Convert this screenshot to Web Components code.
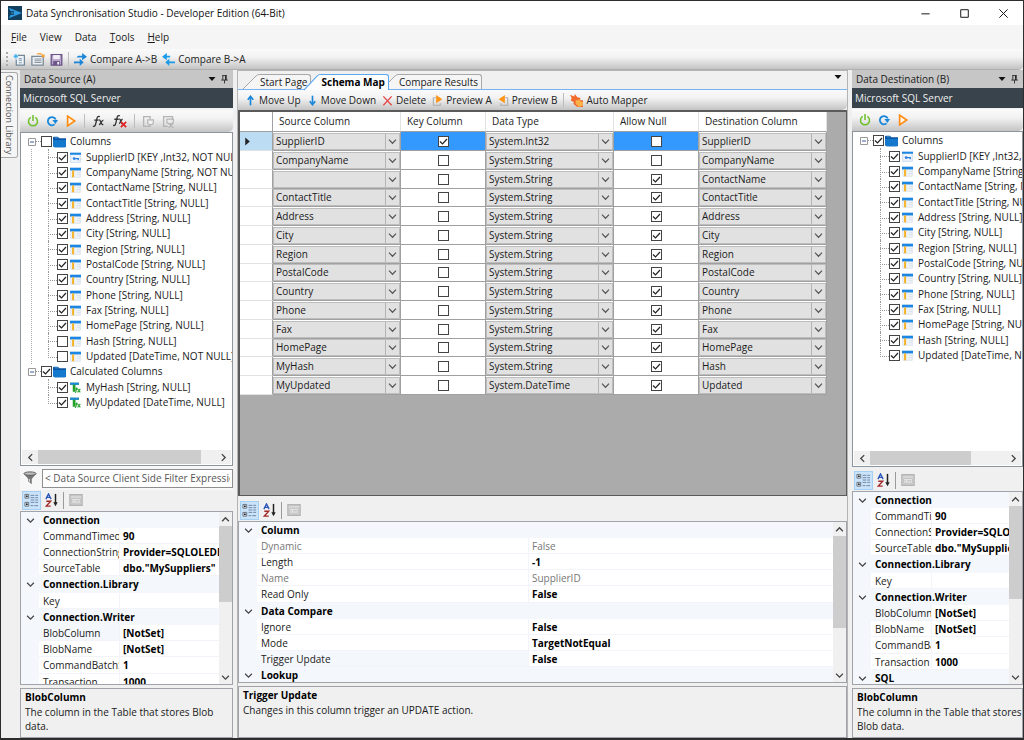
<!DOCTYPE html>
<html lang="en">
<head>
<meta charset="utf-8">
<title>Data Synchronisation Studio</title>
<style>
html,body{height:100%;margin:0}
body{font:10px/15px "Open Sans",sans-serif;color:#1a1a1a;background:#f0f0f0;overflow:hidden}
</style>
</head>
<body>
<sync-studio></sync-studio>
<script>
const ICONS={
logo:'<path fill="#123f5e" d="M0 0h16v16H0z"/><path fill="#2f9be0" d="M1 2l15 6-15 6 3-6z"/><path fill="#0d3552" d="M2 6h5v4H2z"/><path d="M3 8h5" stroke="#3fb0f0"/>',
newdoc:'<path d="M6 3h8v12H4V8" fill="#eef4fa" stroke="#6f8797" stroke-width="1.5"/><path d="M7 7h4M7 9h4M7 12h4" stroke="#6f8797"/><path d="M3.500 1v6M.5 4h6M1.500 2l4 4M5.500 2l-4 4" stroke="#22a4ea"/>',
open:'<path d="M1 5h13v10H1z" fill="#eef1f4" stroke="#7c8a98" stroke-width="1.500"/><path d="M4 8h8M4 10h8M4 12h8" stroke="#7c8a98"/><path d="M7 2.500q5-2 7 2" fill="none" stroke="#f7a030" stroke-width="1.500"/><path d="M15.500 2v4h-4z" fill="#f7a030"/>',
save:'<path d="M1.500 2h13v13h-13z" fill="#b9a6cc" stroke="#6a5386" stroke-width="1.600"/><path d="M4 2.500h8v5H4z" fill="#f3eff7"/><path d="M4 10h8v5H4z" fill="#6a5386"/><path d="M9 11h2v3H9z" fill="#fff"/>',
ab:'<path d="M5 4.500h6M0 11.500h8" stroke="#1c86d8" stroke-width="2"/><path d="M10 0l6 4.500L10 9zM7 7l5 4.500L7 16z" fill="#1c86d8"/><path d="M3 5.500l2-2v2zM0 12.500l2-2v2z" fill="#1c86d8"/>',
ba:'<path d="M5 4.500h5M8 11.500h8" stroke="#1c9be8" stroke-width="2"/><path d="M6 0L0 4.500 6 9zM9 7l-5 4.500L9 16z" fill="#1c9be8"/>',
power:'<path d="M5 3.200a6 6 0 1 0 6 0" fill="none" stroke="#6cc02a" stroke-width="2"/><path d="M8 0v8" stroke="#6cc02a" stroke-width="2"/>',
refresh:'<path d="M13 6A5.500 5.500 0 1 0 11.500 12.500" fill="none" stroke="#1787dc" stroke-width="2.400"/><path d="M8.500 6.500h7.500l-3.500 5.500z" fill="#1787dc"/>',
play:'<path d="M3.500 1.500v13L13 8z" fill="#fff3e4" stroke="#ff8c12" stroke-width="2.200"/>',
fx:'<path d="M1 14c3 1 3-2 4-6s1-6 4-5M2.500 7h5M8 7c2-1 2 6 5 5M13 7c-2 0-3 5-5 5" fill="none" stroke="#333" stroke-width="1.500"/>',
fxdel:'<path d="M0 13c3 1 3-2 4-6s1-6 4-5M1.500 6h5M7 6c2-1 2 6 4 5M11 6c-2 0-3 5-4 5" fill="none" stroke="#333" stroke-width="1.500"/><path d="M9 9l6 6M15 9l-6 6" stroke="#df2222" stroke-width="2"/>',
imp:'<path d="M10 5V2H2v12h8v-2" fill="none" stroke="#b4b4b4" stroke-width="1.600"/><path d="M7 6h7v3q0 3-3.500 3T7 9z" fill="#f0f0f0" stroke="#b4b4b4" stroke-width="1.400"/>',
impx:'<path d="M7 14H2V2h11v4" fill="none" stroke="#b4b4b4" stroke-width="1.600"/><path d="M6 5h8v3q0 3-4 3T6 8zM8 10l6 6M14 10l-6 6" fill="none" stroke="#b4b4b4" stroke-width="1.400"/>',
folder:'<path d="M0 3q0-1 1-1h5l2 2h8v10q0 1-1 1H2q-2 0-2-3z" fill="#0a55a4"/><path d="M0 6h16v7q0 2-2 2H2q-2 0-2-3z" fill="#1478cc"/><path d="M2 3h4l1 1H2z" fill="#58a8e6"/>',
col:'<path d="M1 2h14v13H1z" fill="#eef3f8" stroke="#d3dde8"/><path d="M0 1h16v4H0z" fill="#1c86e0"/><path d="M3 5h3v10H3z" fill="#f5b429"/><path d="M10 8h5M10 11h5" stroke="#d3dde8"/>',
key:'<path d="M1 2h14v13H1z" fill="#eef5fc" stroke="#b9cfe6"/><path d="M0 1h16v3H0z" fill="#1c86e0"/><circle cx="6" cy="9.500" r="2" fill="#2a7fe0"/><path d="M7 9.500h6M12 9v3" stroke="#2a7fe0" stroke-width="1.800"/>',
calc:'<path d="M0 1h13v3H8v10H4V4H0z" fill="#22a02a"/><path d="M0 1h13v3H0z" fill="#1c86e0"/><path d="M7 16c2 0 2-4 3-8M8 10h3M11 10l4 5M15 10l-4 5" fill="none" stroke="#22a02a" stroke-width="1.500"/>',
up:'<path d="M8 15V4" stroke="#1787dc" stroke-width="2.400"/><path d="M4 7l4-5 4 5" fill="none" stroke="#1787dc" stroke-width="2.400"/>',
down:'<path d="M8 1v11" stroke="#1787dc" stroke-width="2.400"/><path d="M4 9l4 5 4-5" fill="none" stroke="#1787dc" stroke-width="2.400"/>',
del:'<path d="M2 2l12 13M14 2L2 15" stroke="#e54848" stroke-width="1.900"/>',
preva:'<path d="M6 4H2v11h10v-3" fill="none" stroke="#b4b4b4" stroke-width="1.800"/><path d="M6 0l9 6-9 6z" fill="#ff9417"/>',
prevb:'<path d="M10 4h4v11H4v-3" fill="none" stroke="#b4b4b4" stroke-width="1.800"/><path d="M10 0L1 6l9 6z" fill="#ff9417"/>',
auto:'<path d="M0 1l5 2 1-3 3 4 4 1-1 2 4 1v8H9l-5-4 1-2-4-2 1-3z" fill="#f26a2c"/><path d="M7 7l3 1 1-2 2 3 3 1v4l-5 2-4-4z" fill="#fbb24a"/>',
funnel:'<path d="M1 3h14l-5 6v6l-4-3V9z" fill="#777"/><ellipse cx="8" cy="3" rx="7" ry="2" fill="#bbb" stroke="#555"/><path d="M7 9v3l1 1V9z" fill="#ddd"/>',
cat:'<path d="M1 1.500h4v4H1zM1 10h4v4H1z" fill="#fff" stroke="#5c6d80"/><path d="M2 3.500h2M3 2.500v2M2 12h2M3 11v2" stroke="#111"/><path d="M7 2.500h4M12 2.500h3M7 5h4M12 5h3M7 7.500h4M12 7.500h3M7 10h4M12 10h3M7 13.500h3M11 13.500h4" stroke="#6b83a4"/>',
az:'<path d="M1 7l3-6 3 6M2 5h4" fill="none" stroke="#2a55b8" stroke-width="1.500"/><path d="M1.500 9.500h5L1.500 15h5" fill="none" stroke="#a32a2a" stroke-width="1.600"/><path d="M12 1v11" stroke="#222" stroke-width="1.700"/><path d="M9.500 10.500h5L12 15z" fill="#222"/>',
pages:'<path d="M1 2h14v12H1z" fill="#d6d6d6" stroke="#b4b4b4" stroke-width="1.500"/><path d="M3 6.500h10v5H3z" fill="#ececec" stroke="#bbb"/><path d="M4 9h2M7 9h5" stroke="#aaa"/>',
tri:'<path d="M1 4h14l-7 8z" fill="#111"/>',
pin:'<path d="M4 1h8M5 1v8M11 1v8M2 9h12M8 9v6" fill="none" stroke="#222" stroke-width="1.500"/><path d="M9 1h2v8H9z" fill="#222"/>',
chd:'<path d="M2 5l6 6 6-6" fill="none" stroke="#444" stroke-width="2.200"/>',
chu:'<path d="M2 11l6-6 6 6" fill="none" stroke="#444" stroke-width="2.400"/>',
chl:'<path d="M11 2L5 8l6 6" fill="none" stroke="#444" stroke-width="2.400"/>',
chr:'<path d="M5 2l6 6-6 6" fill="none" stroke="#444" stroke-width="2.400"/>',
row:'<path d="M4 1v14l8-7z" fill="#222"/>',
min:'<path d="M2 8.500h12" stroke="#111" stroke-width="1.400"/>',
max:'<path d="M2.500 2.500h11v11h-11z" fill="none" stroke="#111" stroke-width="1.400"/>',
close:'<path d="M2 2l12 12M14 2L2 14" stroke="#111" stroke-width="1.400"/>',
minus:'<path d="M1 1h14v14H1z" fill="#fff" stroke="#999" stroke-width="2"/><path d="M4 8h8" stroke="#3c5a9a" stroke-width="2"/>'
};
const RESET=`*{box-sizing:border-box}
button{font:inherit;color:inherit;background:none;border:0;padding:0;margin:0;display:flex;align-items:center}
input[type=checkbox]{appearance:none;flex:none;width:11px;height:11px;margin:0;border:1px solid #444;background:#fff}
input[type=checkbox]:checked{background:#fff url("data:image/svg+xml,%3Csvg xmlns='http://www.w3.org/2000/svg' viewBox='0 0 9 9'%3E%3Cpath d='M1 4.500l2.500 2.500L8 2' fill='none' stroke='%23222' stroke-width='1.200'/%3E%3C/svg%3E")}`;
class Base extends HTMLElement{
  connectedCallback(){
    if(this.shadowRoot)return;
    this.attachShadow({mode:'open'}).innerHTML='<style>'+RESET+this.css()+'</style>'+this.html();
  }
  css(){return ''}
  html(){return '<slot></slot>'}
}
const icon=(n,s=12)=>`<ds-icon name="${n}" size="${s}"></ds-icon>`;

customElements.define('ds-icon',class extends Base{
  css(){const s=this.getAttribute('size')||12;return `:host{display:block;flex:none;width:${s}px;height:${s}px}svg{display:block;width:100%;height:100%}`}
  html(){return `<svg viewBox="0 0 16 16" aria-hidden="true">${ICONS[this.getAttribute('name')]}</svg>`}
});

customElements.define('title-bar',class extends Base{
  css(){return `:host{display:flex;align-items:center;height:24px;flex:none;background:#fff;padding:0 14px 0 7px;color:#111}
  .t{flex:1;margin-left:4px;white-space:nowrap}.c{display:flex;gap:28px}`}
  html(){return `${icon('logo',14)}<span class="t"><slot></slot></span><div class="c">
  <button aria-label="Minimise">${icon('min',11)}</button><button aria-label="Maximise">${icon('max',11)}</button><button aria-label="Close">${icon('close',11)}</button></div>`}
});

customElements.define('menu-bar',class extends Base{
  css(){return `:host{display:flex;align-items:center;gap:13px;height:24px;flex:none;padding:0 10px;background:#f5f5f5}`}
  html(){return '<button><span><u>F</u>ile</span></button><button>View</button><button>Data</button><button><span><u>T</u>ools</span></button><button><span><u>H</u>elp</span></button>'}
});

customElements.define('tool-bar',class extends Base{
  css(){return `:host{display:flex;align-items:center;flex:none;height:var(--h,22px);gap:var(--gap,6px);padding:var(--pad,0 4px 0 8px);
  background:linear-gradient(#fafafa,#f2f2f2 40%,#c4c4c4);border-radius:0 0 5px 0}
  ::slotted(i){width:1px;height:14px;background:#bdbdbd;flex:none}`}
});
customElements.define('tool-button',class extends Base{
  css(){return `:host{display:block;flex:none}button{gap:3px;white-space:nowrap;color:#222}`}
  html(){const l=this.getAttribute('label');return `<button${l?` aria-label="${l}"`:''}>${icon(this.getAttribute('icon'),this.getAttribute('size')||12)}<slot></slot></button>`}
});

customElements.define('dock-panel',class extends Base{
  css(){return `:host{display:flex;flex-direction:column;flex:none;min-width:0;background:#f0f0f0}
  header{display:flex;align-items:center;height:18px;background:#c6c6c6;padding:0 4px 0 4px;gap:4px;flex:none}
  h2{font:inherit;margin:0;flex:1;white-space:nowrap}
  p{margin:0;height:20px;line-height:20px;padding-left:3px;background:#38434b;color:#f0f0f0;flex:none}`}
  html(){return `<header><h2>${this.getAttribute('heading')}</h2><button aria-label="Window position">${icon('tri',8)}</button><button aria-label="Auto hide">${icon('pin',9)}</button></header><p>Microsoft SQL Server</p><slot></slot>`}
});

customElements.define('scroll-strip',class extends Base{
  css(){const v=this.hasAttribute('vertical');return `:host{display:flex;flex:none;background:#f0f0f0;${v?'flex-direction:column;width:13px':'height:14px'}}
  button{flex:none;justify-content:center;${v?'height:14px':'width:16px'}}
  .a{flex:1;display:flex;min-width:0;min-height:0;flex-direction:inherit}.b{background:#cdcdcd;flex:0 0 ${this.getAttribute('thumb')}}`}
  html(){const v=this.hasAttribute('vertical');return `<button aria-label="Back">${icon(v?'chu':'chl',9)}</button><div class="a"><div class="b"></div></div><button aria-label="Forward">${icon(v?'chd':'chr',9)}</button>`}
});

const FIELDS=[['CompanyName','String, NOT NULL'],['ContactName','String, NULL'],['ContactTitle','String, NULL'],['Address','String, NULL'],['City','String, NULL'],['Region','String, NULL'],['PostalCode','String, NULL'],['Country','String, NULL'],['Phone','String, NULL'],['Fax','String, NULL'],['HomePage','String, NULL'],['Hash','String, NULL'],['Updated','DateTime, NOT NULL']];
customElements.define('column-tree',class extends Base{
  css(){return `:host{display:flex;flex-direction:column;flex:1;min-height:0;background:#fff;border:1px solid #8f959e}
  .v{flex:1;overflow:hidden;padding:1px 0 0 7px}
  ul{list-style:none;margin:0;padding:0}
  .r{display:flex;align-items:center;height:15px;white-space:nowrap}
  li li:nth-child(3n+1) .r{height:16px}
  label{display:flex;align-items:center}
  .d{width:5px;height:0;border-top:1px dotted #999;flex:none}
  .root label ds-icon{margin:0 4px 0 1px}
  .k{margin-left:3px;padding-left:16px;border-left:1px dotted #aaa}
  .top>li:last-child .k{border-left-color:transparent}
  .k ds-icon{margin:0 5px 0 2px}
  .n{position:relative;width:9px;align-self:stretch;flex:none}
  .n::before{content:"";position:absolute;left:0;top:0;bottom:0;border-left:1px dotted #999}
  .n::after{content:"";position:absolute;left:0;right:0;top:8px;border-top:1px dotted #999}
  .k li:last-child .n::before{bottom:8px}
  scroll-strip{margin:0 1px 1px}`}
  html(){
    const b=this.hasAttribute('destination');
    const kid=(n,t,i,c)=>`<li><div class="r"><span class="n"></span><label><input type="checkbox"${c?' checked':''}>${icon(i,11)}<span>${n} [${t}]</span></label></div></li>`;
    const root=(n,c,k)=>`<li><div class="r root">${icon('minus',8)}<span class="d"></span><label><input type="checkbox"${c?' checked':''}>${icon('folder',13)}<span>${n}</span></label></div><ul class="k">${k}</ul></li>`;
    let k=kid('SupplierID','KEY ,Int32, NOT NULL','key',1)+FIELDS.map(([n,t],i)=>kid(n,t,'col',b||i<11)).join('');
    return `<div class="v"><ul class="top">${root('Columns',b,k)}${b?'':root('Calculated Columns',1,kid('MyHash','String, NULL','calc',1)+kid('MyUpdated','DateTime, NULL','calc',1))}</ul></div><scroll-strip thumb="${b?'75%':'92%'}"></scroll-strip>`;
  }
});

customElements.define('filter-box',class extends Base{
  css(){return `:host{display:flex;align-items:center;flex:none;height:24px;padding:0 0 0 3px;gap:5px;background:#f7f7f7}
  input{flex:1;min-width:0;height:19px;border:1px solid #8f8f8f;background:#fff;font:inherit;color:#555;padding:0 2px;outline:0}`}
  html(){return `${icon('funnel',14)}<input aria-label="Data source filter" value="&lt; Data Source Client Side Filter Expression &gt;">`}
});

const PG={
a:[['Connection'],['CommandTimeout','90'],['ConnectionString','Provider=SQLOLEDB'],['SourceTable','dbo."MySuppliers"'],['Connection.Library'],['Key',''],['Connection.Writer'],['BlobColumn','[NotSet]',2],['BlobName','[NotSet]'],['CommandBatchSize','1'],['Transaction','1000']],
c:[['Column'],['Dynamic','False',1],['Length','-1'],['Name','SupplierID',1],['Read Only','False'],['Data Compare'],['Ignore','False'],['Mode','TargetNotEqual'],['Trigger Update','False',2],['Lookup']]};
PG.b=[...PG.a.map(r=>[...r]),['SQL']];
customElements.define('property-grid',class extends Base{
  css(){return `:host{display:flex;flex-direction:column;flex:none}
  .bar{display:flex;align-items:center;height:20px;gap:1px;padding-left:2px}
  .bar button{width:19px;height:19px;justify-content:center}
  .bar .on{background:#cbe3f8;border:1px solid #a5d0f2}
  .bar i{width:1px;height:17px;background:#9a9a9a;margin:0 1px}
  .g{display:flex;border:1px solid #a0a4aa;height:var(--gh);background:#f4f7fc;margin-top:1px}
  .rows{flex:1;min-width:0;overflow:hidden}
  .r{display:flex;height:16px;line-height:16px;white-space:nowrap}
  .r:nth-child(5n){height:17px}
  .w{width:18px;flex:none;display:flex;align-items:center;justify-content:center}
  .n{flex:0 0 var(--nw);overflow:hidden;padding-left:4px;background:#fff;border-bottom:1px solid #f2f4f9}
  .x{flex:1;min-width:0;overflow:hidden;padding-left:3px;font-weight:700;color:#000;background:#fff;border-left:1px solid #f2f4f9;border-bottom:1px solid #f2f4f9}
  .cat{flex:1;font-weight:700;padding-left:4px;color:#000}
  .ro .n,.ro .x{color:#777;font-weight:400}
  .sel .n{background:#f4f7fc}
  .desc{border:1px solid #a0a4aa;margin-top:3px;height:var(--dh);padding:1px 0 1px 4px;background:#f0f0f0}
  .desc b{display:block;color:#000}.desc p{margin:0;line-height:14px}`}
  html(){
    const rows=PG[this.getAttribute('set')].map(([n,v,f])=>v===undefined?`<div class="r"><span class="w">${icon('chd',9)}</span><span class="cat">${n}</span></div>`
      :`<div class="r ${f==1?'ro':f==2?'sel':''}"><span class="w"></span><span class="n">${n}</span><span class="x">${v}</span></div>`).join('');
    return `<div class="bar"><button class="on" aria-label="Categorised">${icon('cat',15)}</button><button aria-label="Alphabetical">${icon('az',14)}</button><i></i><button aria-label="Property pages">${icon('pages',14)}</button></div>
    <div class="g"><div class="rows">${rows}</div><scroll-strip vertical thumb="${this.getAttribute('thumb')}"></scroll-strip></div>
    <div class="desc"><b>${this.getAttribute('heading')}</b><p><slot></slot></p></div>`;
  }
});

customElements.define('doc-tabs',class extends Base{
  css(){return `:host{display:flex;align-items:flex-end;flex:none;height:19px;padding:0 5px;background:#f0f0f0;border-bottom:1px solid #74b4f0}
  button{height:15px;align-items:stretch;position:relative}
  svg{display:block;width:16px;height:15px;flex:none;overflow:visible}
  span{border-top:1px solid #a8a8a8;border-right:1px solid #a8a8a8;border-radius:0 3px 0 0;padding:0 3px 0 1px;background:#f5f5f5;line-height:15px;white-space:nowrap}
  button+button{margin-left:-7px}
  .on{z-index:1;height:16px;margin-bottom:-1px}.on svg{height:16px}.on span{border-color:#5ba7f0;background:#fdfdfd;font-weight:700;color:#000}
  em{flex:1}.m{align-self:center}`}
  html(){const t=(n,c)=>`<button class="${c?'on':''}"><svg viewBox="0 0 16 15" preserveAspectRatio="none"><path d="M0 15L13 2q2-1.500 3-1.500V15z" fill="${c?'#fdfdfd':'#f5f5f5'}"/><path d="M0 15L13 2q2-1.500 3-1.500" fill="none" stroke="${c?'#5ba7f0':'#a8a8a8'}"/></svg><span>${n}</span></button>`;
  return t('Start Page')+t('Schema Map',1)+t('Compare Results')+`<em></em><button class="m" aria-label="Tab list">${icon('tri',8)}</button>`}
});

customElements.define('schema-table',class extends Base{
  css(){return `:host{display:block;flex:1;min-height:0;overflow:hidden;background:#ababab;border:2px solid #5a5a5a;border-width:2px 1px 1px 2px}
  table{border-collapse:separate;border-spacing:0;table-layout:fixed;width:587px;background:#fff}
  th,td{padding:0;border-right:1px solid #a0a0a0;border-bottom:1px solid #a0a0a0;text-align:center;overflow:hidden;height:19px}
  tr:nth-child(4n) td{height:18px}
  th{height:20px;font-weight:400;text-align:left;padding-left:6px;border-right-color:#e2e2e2;color:#222}
  th:first-child{border-right-color:#a0a0a0}
  td:first-child{border-bottom-color:#e2e2e2}
  td:first-child ds-icon{margin-left:3px}
  td input{display:block;margin:0 auto!important}
  select{appearance:none;display:block;width:100%;height:17px;margin:0;padding:0 0 0 2px;border:1px solid #bdbdbd;border-radius:0;font:inherit;line-height:15px;color:#1a1a1a;
   background:#e1e1e1 url("data:image/svg+xml,%3Csvg xmlns='http://www.w3.org/2000/svg' viewBox='0 0 14 16'%3E%3Cpath d='M.5 0v16' stroke='%23b4b4b4'/%3E%3Cpath d='M4 6l3.500 3.500L11 6' fill='none' stroke='%23555' stroke-width='1.200'/%3E%3C/svg%3E") right center/14px 16px no-repeat}
  .s td:first-child{background:#bcdcf4}.s .c{background:#3399ff}`}
  html(){
    const N=['SupplierID','CompanyName','ContactName','ContactTitle','Address','City','Region','PostalCode','Country','Phone','Fax','HomePage','Hash','Updated'];
    const src={2:'',12:'MyHash',13:'MyUpdated'};
    const sel=(v,l)=>`<td><select aria-label="${l}"><option>${v}</option></select></td>`;
    const chk=(c,l)=>`<td class="c"><input type="checkbox" aria-label="${l}"${c?' checked':''}></td>`;
    return `<table><colgroup><col style="width:33px"><col style="width:128px"><col style="width:85px"><col style="width:128px"><col style="width:85px"><col style="width:128px"></colgroup>
    <thead><tr><th></th><th>Source Column</th><th>Key Column</th><th>Data Type</th><th>Allow Null</th><th>Destination Column</th></tr></thead><tbody>${
    N.map((n,i)=>`<tr class="${i?'':'s'}"><td>${i?'':icon('row',9)}</td>${sel(i in src?src[i]:n,'Source column')}${chk(i==0,'Key column')}${sel('System.'+(i==0?'Int32':i==13?'DateTime':'String'),'Data type')}${chk(i>1,'Allow null')}${sel(n,'Destination column')}</tr>`).join('')}</tbody></table>`;
  }
});

customElements.define('side-tab',class extends Base{
  css(){return `:host{display:block;flex:none;width:19px;padding-top:2px;background:#f0f0f0}
  button{writing-mode:vertical-rl;width:17px;height:86px;justify-content:center;border:1px solid #a8a8a8;border-left:0;border-radius:0 3px 3px 0;background:#f5f5f5;color:#555;font-size:9px;white-space:nowrap}`}
  html(){return '<button><slot></slot></button>'}
});

customElements.define('sync-studio',class extends Base{
  css(){return `:host{display:flex;flex-direction:column;height:100vh;box-sizing:border-box;border:1px solid #2d2d2d;border-bottom-width:2px;background:#f0f0f0}
  .main{display:flex;flex:1;min-height:0}
  .mid{flex:1;min-width:0;display:flex;flex-direction:column;margin:0 4px;border:1px solid #b4b4b4;border-width:1px 1px 0 1px}
  .a{width:213px;--gh:174px;--dh:50px;--nw:80px}
  .b{width:171px;--gh:194px;--dh:50px;--nw:60px}
  .mid property-grid{--gh:162px;--dh:52px;--nw:271px;margin-top:4px}
  .gap{height:3px;flex:none}
  .top{--h:21px;--gap:5px;--pad:0 4px 0 5px;border-bottom:1px solid #b0b0b0}
  .dock{--h:22px;--gap:7px;--pad:0 7px;margin-top:1px}
  .a .dock{margin-top:2px}
  .maptools{--h:20px;--gap:6px;--pad:0 4px 0 7px}
  .dots{width:2px;height:14px;background:repeating-linear-gradient(#aaa 0 2px,transparent 2px 4px);flex:none}`}
  html(){
    const tb=(i,l,s=12)=>`<tool-button icon="${i}" label="${l}" size="${s}"></tool-button>`;
    const tt=(i,t,s=12)=>`<tool-button icon="${i}" size="${s}">${t}</tool-button>`;
    return `<title-bar>Data Synchronisation Studio - Developer Edition (64-Bit)</title-bar>
    <menu-bar></menu-bar>
    <tool-bar class="top"><span class="dots"></span>${tb('newdoc','New',13)}${tb('open','Open',14)}${tb('save','Save',13)}<i></i>${tt('ab','Compare A-&gt;B',13)}${tt('ba','Compare B-&gt;A',13)}</tool-bar>
    <div class="main">
      <side-tab>Connection Library</side-tab>
      <dock-panel class="a" heading="Data Source (A)">
        <tool-bar class="dock">${tb('power','Connect')}${tb('refresh','Refresh')}${tb('play','Run')}<i></i>${tb('fx','Add function',14)}${tb('fxdel','Remove function',14)}<i></i>${tb('imp','Import',13)}${tb('impx','Clear',13)}</tool-bar>
        <column-tree></column-tree>
        <filter-box></filter-box>
        <property-grid set="a" thumb="53%" heading="BlobColumn">The column in the Table that stores Blob data.</property-grid>
      </dock-panel>
      <div class="mid">
        <doc-tabs></doc-tabs>
        <tool-bar class="maptools">${tt('up','Move Up',11)}${tt('down','Move Down',11)}${tt('del','Delete',11)}${tt('preva','Preview A',11)}${tt('prevb','Preview B',11)}<i></i>${tt('auto','Auto Mapper',13)}</tool-bar>
        <schema-table></schema-table>
        <property-grid set="c" thumb="70%" heading="Trigger Update">Changes in this column trigger an UPDATE action.</property-grid>
      </div>
      <dock-panel class="b" heading="Data Destination (B)">
        <tool-bar class="dock">${tb('power','Connect')}${tb('refresh','Refresh')}${tb('play','Run')}</tool-bar>
        <column-tree destination></column-tree>
        <div class="gap"></div>
        <property-grid set="b" thumb="57%" heading="BlobColumn">The column in the Table that stores Blob data.</property-grid>
      </dock-panel>
    </div>`;
  }
});
</script>
</body>
</html>
